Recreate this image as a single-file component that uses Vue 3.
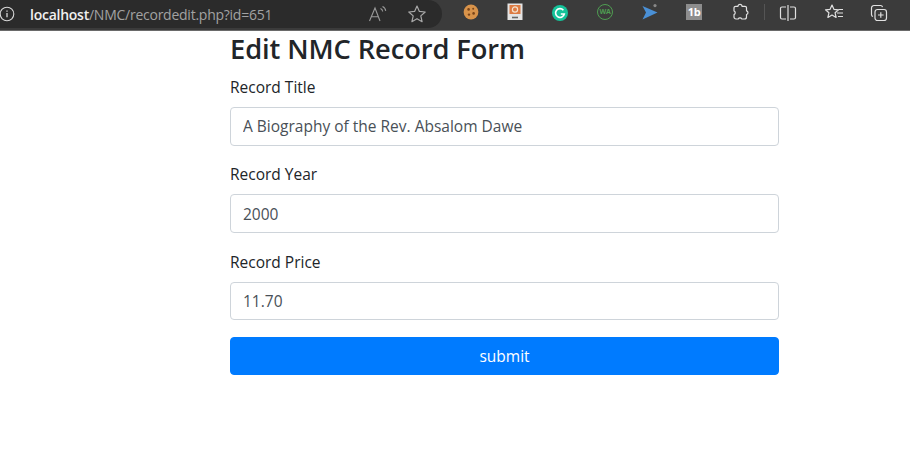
<script setup>
const fields = [
  { label: 'Record Title', value: 'A Biography of the Rev. Absalom Dawe' },
  { label: 'Record Year', value: '2000' },
  { label: 'Record Price', value: '11.70' },
]
</script>

<template>
  <div class="page">
    <header class="toolbar">
      <div class="omnibox">
        <svg class="info" width="16" height="16" viewBox="0 0 16 16" fill="none" stroke="#d8d8d8" stroke-width="1.1">
          <circle cx="7" cy="8" r="6.8" />
          <path d="M7 7v4.2" stroke-width="1.3" />
          <path d="M7 4.4v1.3" stroke-width="1.3" />
        </svg>
        <div class="url"><b>localhost</b><span>/NMC/recordedit.php?id=651</span></div>
        <svg class="read" width="22" height="18" viewBox="0 0 22 18" fill="none" stroke="#9a9a9a" stroke-width="1.1">
          <path d="M1.5 16 7 3l5 13M3.4 11.8h7.2" />
          <path d="M12.5 3.5c1.3.6 2 1.6 2.2 3M14.5 1.5c2 .9 3 2.4 3.2 4.4" />
        </svg>
        <svg class="star" width="20" height="20" viewBox="0 0 20 20" fill="none" stroke="#a8a8a8" stroke-width="1.2" stroke-linejoin="round">
          <path d="M10 2l2.4 5.4 5.8.6-4.4 3.9 1.3 5.8L10 14.7l-5.1 3 1.3-5.8L1.8 8l5.8-.6z" />
        </svg>
      </div>
      <div class="exts">
        <svg class="ext cookie" width="16" height="16" viewBox="0 0 16 16">
          <circle cx="8" cy="8" r="7.4" fill="#d8934a" />
          <circle cx="5.6" cy="5.4" r="1.3" fill="#7a4519" />
          <circle cx="10.2" cy="4.8" r="1" fill="#7a4519" />
          <circle cx="10.6" cy="9.4" r="1.3" fill="#7a4519" />
          <circle cx="6" cy="10.6" r="1.2" fill="#7a4519" />
        </svg>
        <svg class="ext ubuntu" width="16" height="18" viewBox="0 0 16 18">
          <rect x="0.5" y="0.5" width="15" height="16.5" fill="#e4e4e4" />
          <rect x="2.5" y="2" width="11" height="9" fill="#dd7b43" />
          <circle cx="8" cy="6.5" r="2.6" fill="none" stroke="#f4e3d0" stroke-width="1.2" />
          <path d="M5 14.5h6" stroke="#666" stroke-width="1.6" />
        </svg>
        <svg class="ext grammarly" width="16" height="16" viewBox="0 0 16 16" fill="none">
          <circle cx="8" cy="8" r="8" fill="#15c39a" />
          <path d="M11.4 5.2A4.4 4.4 0 1 0 12.3 9H8.8" stroke="#fff" stroke-width="1.6" />
        </svg>
        <div class="wa">WA</div>
        <svg class="ext arrow" width="16" height="16" viewBox="0 0 16 16">
          <path d="M0.5 2l15 6.5-15 7 3.5-7z" fill="#4a90d6" />
          <circle cx="13" cy="1.6" r="1.6" fill="#888" />
        </svg>
        <div class="tb">1b</div>
        <svg class="ext puzzle" width="18" height="18" viewBox="0 0 18 18" fill="none" stroke="#e0e0e0" stroke-width="1.2" stroke-linejoin="round">
          <path d="M7 3.3a2 2 0 0 1 4 0h3a1.5 1.5 0 0 1 1.5 1.5v3a1.9 1.9 0 0 1 0 3.7V14a2 2 0 0 1-2 2h-2.7a2 2 0 0 0-3.6 0H5a2 2 0 0 1-2-2v-2.4a2 2 0 0 0 0-3.7V5a1.7 1.7 0 0 1 1.7-1.7z" />
        </svg>
        <span class="sep"></span>
        <svg class="ext split" width="18" height="18" viewBox="0 0 18 18" fill="none" stroke="#e0e0e0" stroke-width="1.2">
          <path d="M7 3H3a1.5 1.5 0 0 0-1.5 1.5v9A1.5 1.5 0 0 0 3 15h4M11 3h4a1.5 1.5 0 0 1 1.5 1.5v9A1.5 1.5 0 0 1 15 15h-4M9 1v16" />
        </svg>
        <svg class="ext favs" width="20" height="18" viewBox="0 0 20 18" fill="none" stroke="#e0e0e0" stroke-width="1.2" stroke-linejoin="round">
          <path d="M8 2l1.9 4.3 4.6.5-3.4 3 1 4.6L8 12l-4.1 2.4 1-4.6-3.4-3 4.6-.5z" />
          <path d="M14.5 6.5H19M13 10h6M14 13.5h5" />
        </svg>
        <svg class="ext coll" width="18" height="18" viewBox="0 0 18 18" fill="none" stroke="#e0e0e0" stroke-width="1.2">
          <rect x="5" y="5.5" width="11.5" height="11" rx="2.5" />
          <path d="M3 12.5a2 2 0 0 1-1.5-2V4a2.5 2.5 0 0 1 2.5-2.5h6.5a2 2 0 0 1 2 1.6" />
          <path d="M10.8 8.2v5.6M8 11h5.6" />
        </svg>
      </div>
    </header>

    <main class="content">
      <h2 class="title">Edit NMC Record Form</h2>
      <form class="form" @submit.prevent>
        <div v-for="f in fields" :key="f.label" class="group">
          <label class="label">{{ f.label }}</label>
          <input class="input" type="text" :value="f.value" />
        </div>
        <button class="submit" type="submit">submit</button>
      </form>
    </main>
  </div>
</template>

<style>
html, body { margin: 0; background: #fff; }
</style>

<style scoped>
.page {
  width: 910px;
  height: 471px;
  overflow: hidden;
  font-family: "Open Sans", "Noto Sans", sans-serif;
  color: #212529;
}
.toolbar {
  height: 31px;
  box-sizing: border-box;
  background: #3b3b3b;
  border-bottom: 1px solid #6a6a6a;
  display: flex;
  align-items: flex-start;
}
.omnibox {
  width: 442px;
  height: 28px;
  flex: none;
  box-sizing: border-box;
  background: #2b2b2b;
  border-radius: 0 14px 14px 0;
  display: flex;
  align-items: center;
}
.info { flex: none; }
.url {
  margin-left: 14px;
  font-size: 14px;
  letter-spacing: -0.25px;
  white-space: nowrap;
  width: 323px;
  flex: none;
  color: #a2a2a2;
}
.url b { color: #f0f0f0; font-weight: 600; }
.read { flex: none; margin-left: 15px; }
.star { flex: none; margin-left: 17px; }
.exts {
  flex: 1;
  height: 30px;
  position: relative;
}
.ext, .wa, .tb, .sep { position: absolute; }
.cookie { left: 21px; top: 4px; }
.ubuntu { left: 65px; top: 3px; }
.grammarly { left: 110px; top: 5px; }
.wa {
  left: 155px; top: 4px;
  box-sizing: border-box;
  width: 16px; height: 16px;
  border-radius: 50%;
  border: 1.5px solid #4f9e52;
  color: #4f9e52;
  font: 700 7px/13px "Open Sans", sans-serif;
  letter-spacing: -0.3px;
  text-align: center;
}
.arrow { left: 200px; top: 4px; }
.tb {
  left: 244px; top: 4px;
  width: 16px; height: 16px;
  background: #8d8d8d;
  color: #fff;
  font: 700 11px/16px "Open Sans", sans-serif;
  letter-spacing: -0.5px;
  text-align: center;
}
.puzzle { left: 289px; top: 3px; }
.sep { left: 322px; top: 4px; width: 1px; height: 16px; background: #555; }
.split { left: 337px; top: 4px; }
.favs { left: 382px; top: 3px; }
.coll { left: 428px; top: 4px; }
.content {
  width: 549px;
  margin-left: 230px;
}
.title {
  margin: 0 0 8px;
  font-size: 27.3px;
  line-height: 36px;
  font-weight: 600;
  letter-spacing: -0.1px;
}
.form { display: flex; flex-direction: column; }
.group { margin-bottom: 16.75px; }
.label {
  display: block;
  font-size: 15.5px;
  line-height: 24px;
  margin-bottom: 8px;
}
.input {
  display: block;
  width: 100%;
  height: 38.5px;
  box-sizing: border-box;
  padding: 6px 12px;
  font-family: inherit;
  font-size: 15.5px;
  color: #495057;
  background: #fff;
  border: 1px solid #ced4da;
  border-radius: 4px;
  outline: none;
}
.submit {
  height: 38.5px;
  border: 1px solid #007bff;
  border-radius: 4px;
  background: #007bff;
  color: #fff;
  font-family: inherit;
  font-size: 15.5px;
}
</style>
